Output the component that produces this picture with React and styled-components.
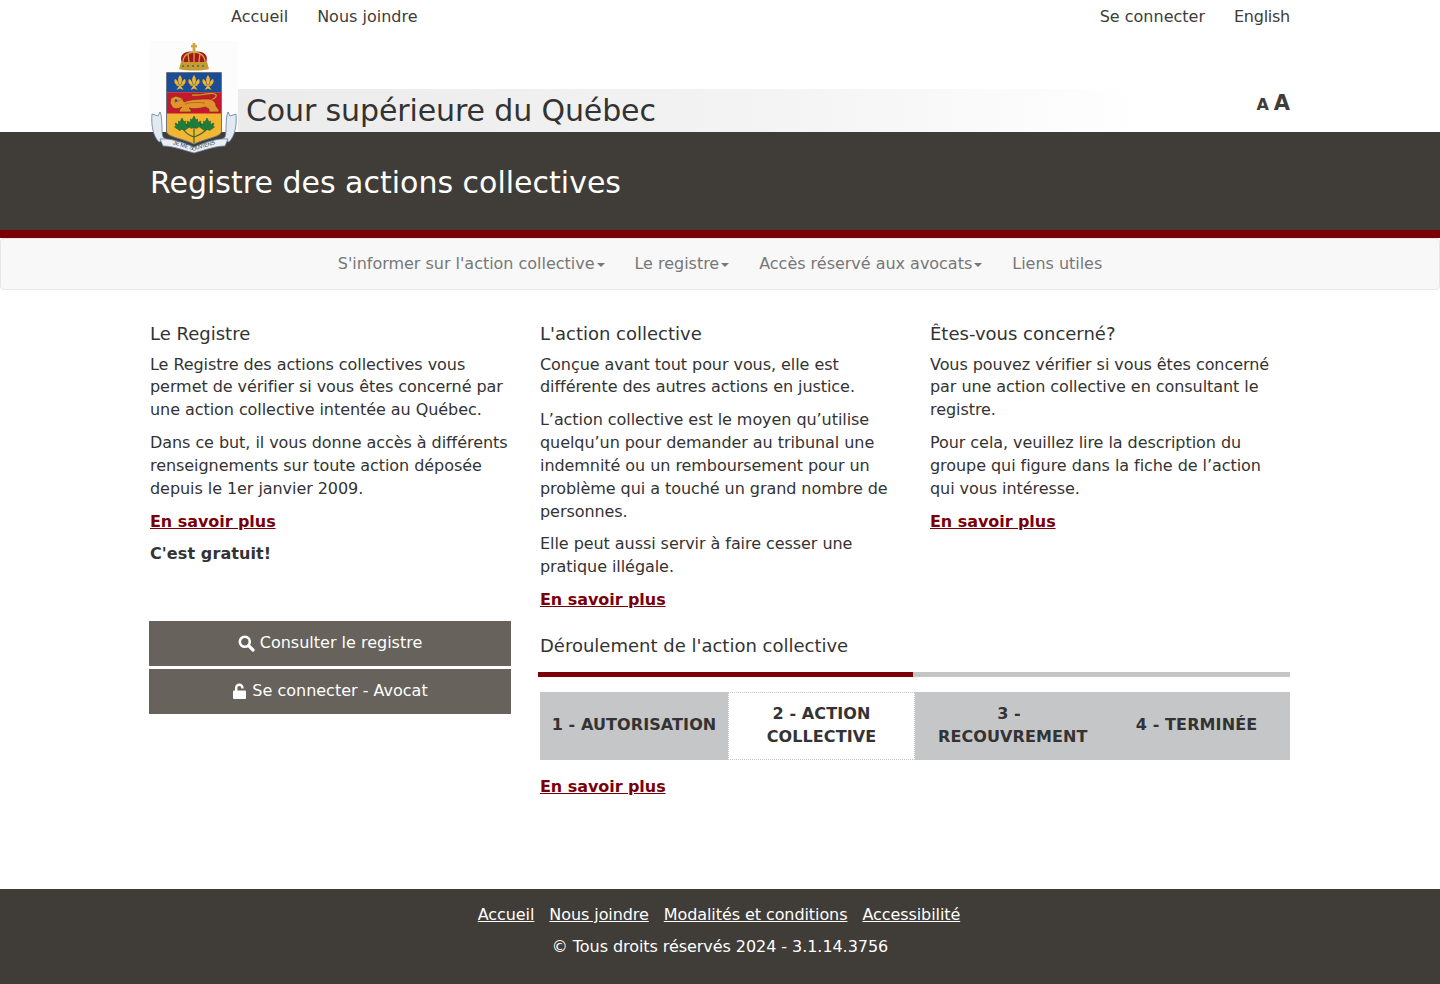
import React from 'react'
import styled, { createGlobalStyle } from 'styled-components'

const GlobalStyle = createGlobalStyle`
  * { box-sizing: border-box; }
  body {
    margin: 0;
    background: #fff;
    color: #333;
    font-family: "DejaVu Sans", sans-serif;
    font-size: 16px;
    line-height: 22.857px;
    letter-spacing: -0.06px;
  }
`

const leaf = (x, y) =>
  `M${x} ${y - 8} L${x + 2} ${y - 4} L${x + 3.5} ${y - 5} L${x + 3.5} ${y - 1.5} L${x + 7} ${y - 3} L${x + 6} ${y} L${x + 7.5} ${y + 1} L${x + 2.5} ${y + 4.5} L${x + 0.6} ${y + 3.5} L${x - 0.6} ${y + 3.5} L${x - 2.5} ${y + 4.5} L${x - 7.5} ${y + 1} L${x - 6} ${y} L${x - 7} ${y - 3} L${x - 3.5} ${y - 1.5} L${x - 3.5} ${y - 5} L${x - 2} ${y - 4} Z`

const Crest = () => (
  <svg width="90" height="114" viewBox="0 0 90 114">
    <rect x="1" y="0" width="88" height="91" fill="#fcfcfc" />
    {/* couronne */}
    <path d="M33 22 C29 12 39 9 45 11 C51 9 61 12 57 22 Z" fill="#a4161c" />
    <path d="M34 21 C34 15 39 11 45 11 C51 11 56 15 56 21 M45 11 V21 M39 12 L40 21 M51 12 L50 21" fill="none" stroke="#d2a63e" strokeWidth="1.3" />
    <path d="M32 21 H58 L60 28 C52 30 38 30 30 28 Z" fill="#c79a34" />
    <path d="M33 25 H57" stroke="#2f7a46" strokeWidth="1.6" strokeDasharray="2 3" />
    <rect x="43.6" y="2" width="2.8" height="9" fill="#d2a63e" />
    <rect x="42" y="4" width="6" height="2.4" fill="#d2a63e" />
    {/* ecu */}
    <path d="M17.5 31.5 H72.5 V90 C72.5 96 58 97 45 103 C32 97 17.5 96 17.5 90 Z" fill="#f2b632" stroke="#6a7686" strokeWidth="1" />
    <rect x="18" y="32" width="54" height="19.5" fill="#1b4c96" />
    <rect x="18" y="51.5" width="54" height="21" fill="#c8162e" />
    {/* fleurs de lys */}
    {[31, 45, 59].map((x) => (
      <g key={x} fill="#efb52e">
        <path d={`M${x} 34 C${x + 2.4} 37 ${x + 2.4} 40 ${x + 0.8} 43 H${x - 0.8} C${x - 2.4} 40 ${x - 2.4} 37 ${x} 34 Z`} />
        <path d={`M${x - 1.4} 44 C${x - 5} 44 ${x - 6.5} 41 ${x - 5} 38 C${x - 3.5} 38.5 ${x - 2.5} 40 ${x - 1.6} 42 Z`} />
        <path d={`M${x + 1.4} 44 C${x + 5} 44 ${x + 6.5} 41 ${x + 5} 38 C${x + 3.5} 38.5 ${x + 2.5} 40 ${x + 1.6} 42 Z`} />
        <rect x={x - 3.5} y="43.4" width="7" height="1.4" />
        <path d={`M${x - 1} 45 L${x - 3.5} 49 L${x} 47.6 L${x + 3.5} 49 L${x + 1} 45 Z`} />
      </g>
    ))}
    {/* leopard */}
    <path d="M62 59 C68 57 69 53 64 52.5 C58 52 52 55 43 54" fill="none" stroke="#8a4a14" strokeWidth="2.2" />
    <path d="M62 59 C68 57 69 53 64 52.5 C58 52 52 55 43 54" fill="none" stroke="#e3932e" strokeWidth="1.2" />
    <path d="M22 57 L27 55 L33 57 L35 61 C42 58 52 58 60 58 C65 59 67 62 67 65 L70 69 L70 71 L60 71 L60 68 L56 66 C50 68 44 68 40 67 L42 69 L42 71 L30 71 L31 68 L33 66 C30 68 26 68 24 67 L21 62 Z" fill="#e3932e" stroke="#74320f" strokeWidth="0.7" />
    <path d="M36 63 C42 61 50 61 56 62 M33 58 C30 60 27 61 25 61" fill="none" stroke="#a85d1a" strokeWidth="0.7" />
    <circle cx="27" cy="59.5" r="1.2" fill="#234a9c" />
    {/* feuilles d'erable */}
    <path d="M45 84 V102 M34 88 C38 94 42 95 45 96 M58 88 C52 94 48 95 45 96" fill="none" stroke="#3f6a30" strokeWidth="1.2" />
    <path d={leaf(33, 85)} fill="#1f7d3b" stroke="#14532a" strokeWidth="0.5" />
    <path d={leaf(45, 83)} fill="#1f7d3b" stroke="#14532a" strokeWidth="0.5" />
    <path d={leaf(58, 85)} fill="#1f7d3b" stroke="#14532a" strokeWidth="0.5" />
    {/* ruban */}
    <path d="M3 73 L9 75 L11 71 C14 78 12 90 14 96 L18 99 L10 101 C4 95 2 84 3 73 Z" fill="#e2e9f1" stroke="#5f7f9f" strokeWidth="0.8" />
    <path d="M87 73 L81 75 L79 71 C76 78 78 90 76 96 L72 99 L80 101 C86 95 88 84 87 73 Z" fill="#e2e9f1" stroke="#5f7f9f" strokeWidth="0.8" />
    <path d="M11 98 C22 97 32 101 45 106 C58 101 68 97 79 98 L76 105 C66 105 56 109 45 112 C34 109 24 105 14 105 Z" fill="#e8eef4" stroke="#5f7f9f" strokeWidth="0.8" />
    <path id="devise" d="M15 101.5 C26 103 36 107 45 109.5 C54 107 64 103 75 101.5" fill="none" />
    <text fontSize="5.4" fontFamily="Liberation Sans, sans-serif" fill="#2e3a48" textAnchor="middle">
      <textPath href="#devise" startOffset="50%">JE ME SOUVIENS</textPath>
    </text>
  </svg>
)

const SearchIcon = () => (
  <svg width="17" height="17" viewBox="0 0 17 17">
    <circle cx="6.8" cy="6.8" r="5" fill="none" stroke="#fff" strokeWidth="2.6" />
    <path d="M10.6 10.6 L15 15" stroke="#fff" strokeWidth="3.2" strokeLinecap="round" />
  </svg>
)

const UnlockIcon = () => (
  <svg width="15" height="16" viewBox="0 0 15 16">
    <path d="M3 8 V4.8 C3 2.2 5 .6 7.3 .6 C9.6 .6 11.6 2.2 11.6 4.8 V5.6 H9.2 V4.8 C9.2 3.6 8.4 2.9 7.3 2.9 C6.2 2.9 5.4 3.6 5.4 4.8 V8 Z" fill="#fff" />
    <rect x="1" y="7.4" width="13" height="8.6" rx="1" fill="#fff" />
  </svg>
)

const TopBar = styled.div`
  width: 1140px;
  margin: 0 auto;
  height: 41px;
  padding: 6px 0 0 81px;
  display: flex;
  justify-content: space-between;
`

const TopLinks = styled.div`
  display: flex;
  gap: 29px;
`

const TopLink = styled.a`
  color: #403c37;
  height: 23px;
  letter-spacing: ${(p) => (p.$tight ? '-0.25px' : '0')};
`

const BrandRow = styled.div`
  width: 1140px;
  height: 91px;
  margin: 0 auto;
  position: relative;
  display: flex;
  align-items: flex-end;
  justify-content: space-between;
`

const BrandBand = styled.div`
  width: 1000px;
  height: 43px;
  padding-left: 96px;
  background: linear-gradient(to right, #eaeaea, #f3f3f3 60%, #fff);
  display: flex;
  align-items: center;
`

const BrandTitle = styled.div`
  font-size: 30px;
  line-height: 43px;
  letter-spacing: -0.12px;
  color: #333;
`

const CrestBox = styled.div`
  position: absolute;
  left: -1px;
  top: 0;
  z-index: 2;
  line-height: 0;
`

const FontSizer = styled.div`
  display: flex;
  align-items: baseline;
  gap: 5px;
  height: 44px;
  color: #403c37;
  font-weight: bold;
`

const FontA = styled.span`
  font-size: ${(p) => p.$size}px;
  line-height: 30px;
`

const DarkBand = styled.div`
  background: #403c37;
  height: 98px;
`

const DarkInner = styled.div`
  width: 1140px;
  margin: 0 auto;
  padding-top: 29px;
  font-size: 30px;
  line-height: 43px;
  letter-spacing: 0;
  color: #fff;
`

const RedBar = styled.div`
  height: 8px;
  background: #7a0008;
`

const NavBar = styled.nav`
  height: 52px;
  background: #f8f8f8;
  border: 1px solid #e7e7e7;
  border-radius: 4px;
  display: flex;
  justify-content: center;
  gap: 30px;
  color: #777;
  letter-spacing: -0.02px;
  align-items: center;
`

const NavItem = styled.a`
  display: flex;
  align-items: center;
`

const Caret = styled.span`
  width: 0;
  height: 0;
  margin-left: 2px;
  margin-top: 2px;
  border-top: 4px solid #777;
  border-left: 4px solid transparent;
  border-right: 4px solid transparent;
`

const Main = styled.main`
  width: 1140px;
  height: 599px;
  margin: 0 auto;
  padding-top: 32px;
  display: grid;
  grid-template-columns: 360px 750px;
  column-gap: 30px;
  align-items: start;
`

const Heading = styled.h4`
  margin: 0 0 7.6px;
  font-size: 18px;
  font-weight: 500;
  line-height: 24px;
  letter-spacing: 0;
  color: #333;
`

const Para = styled.p`
  margin: 0 0 9.9px;
`

const Strong = styled.strong`
  letter-spacing: 0.1px;
`

const MoreLink = styled.a`
  color: #7a0008;
  font-weight: bold;
  text-decoration: underline;
`

const Buttons = styled.div`
  margin: 55px -1px 0;
  display: flex;
  flex-direction: column;
  gap: 3px;
`

const ActionButton = styled.a`
  height: 45px;
  padding-bottom: 1px;
  background: #67625c;
  color: #fff;
  letter-spacing: 0;
  display: flex;
  align-items: center;
  justify-content: center;
  gap: 5px;
`

const RightCols = styled.div`
  display: grid;
  grid-template-columns: 360px 360px;
  column-gap: 30px;
`

const StepsHeading = styled(Heading)`
  margin: 12.4px 0 14px;
`

const Progress = styled.div`
  height: 5px;
  margin-left: -2px;
  background: #c5c5c5;
`

const ProgressFill = styled.div`
  height: 100%;
  background: #7a0008;
`

const Steps = styled.div`
  margin-top: 15px;
  height: 68px;
  background: #c5c6c8;
  display: grid;
  grid-template-columns: 188px 187px 188px 187px;
`

const Step = styled.div`
  display: flex;
  align-items: center;
  padding: 0 ${(p) => p.$pad}px 1px;
  text-align: center;
  font-weight: bold;
  text-transform: uppercase;
  letter-spacing: 0.1px;
  color: #333;
  background: ${(p) => (p.$active ? '#fff' : 'transparent')};
  border: ${(p) => (p.$active ? '1px dotted #c5c6c8' : 'none')};
`

const StepLabel = styled.span`
  flex: 1 1 0;
  min-width: 0;
`

const StepsLink = styled.div`
  margin-top: 16px;
`

const Footer = styled.footer`
  height: 95px;
  background: #403c37;
  color: #fff;
  padding-top: 15px;
  text-align: center;
`

const FooterLinks = styled.div`
  display: flex;
  justify-content: center;
  gap: 15px;
  margin-bottom: 9px;
  padding-right: 2px;
`

const FooterLink = styled.a`
  color: #fff;
  letter-spacing: -0.08px;
  text-decoration: underline;
`

const steps = [
  { label: '1 - Autorisation', pad: 10 },
  { label: '2 - Action collective', pad: 10, active: true },
  { label: '3 - Recouvrement', pad: 23 },
  { label: '4 - Terminée', pad: 10 },
]

export default function App() {
  return (
    <>
      <GlobalStyle />
      <TopBar>
        <TopLinks>
          <TopLink>Accueil</TopLink>
          <TopLink>Nous joindre</TopLink>
        </TopLinks>
        <TopLinks>
          <TopLink>Se connecter</TopLink>
          <TopLink $tight>English</TopLink>
        </TopLinks>
      </TopBar>
      <BrandRow>
        <CrestBox>
          <Crest />
        </CrestBox>
        <BrandBand>
          <BrandTitle>Cour supérieure du Québec</BrandTitle>
        </BrandBand>
        <FontSizer>
          <FontA $size={16}>A</FontA>
          <FontA $size={21}>A</FontA>
        </FontSizer>
      </BrandRow>
      <DarkBand>
        <DarkInner>Registre des actions collectives</DarkInner>
      </DarkBand>
      <RedBar />
      <NavBar>
        <NavItem>S'informer sur l'action collective<Caret /></NavItem>
        <NavItem>Le registre<Caret /></NavItem>
        <NavItem>Accès réservé aux avocats<Caret /></NavItem>
        <NavItem>Liens utiles</NavItem>
      </NavBar>
      <Main>
        <section>
          <Heading>Le Registre</Heading>
          <Para>Le Registre des actions collectives vous permet de vérifier si vous êtes concerné par une action collective intentée au Québec.</Para>
          <Para>Dans ce but, il vous donne accès à différents renseignements sur toute action déposée depuis le 1er janvier 2009.</Para>
          <Para><MoreLink>En savoir plus</MoreLink></Para>
          <Para><Strong>C'est gratuit!</Strong></Para>
          <Buttons>
            <ActionButton><SearchIcon />Consulter le registre</ActionButton>
            <ActionButton><UnlockIcon />Se connecter - Avocat</ActionButton>
          </Buttons>
        </section>
        <section>
          <RightCols>
            <div>
              <Heading>L'action collective</Heading>
              <Para>Conçue avant tout pour vous, elle est différente des autres actions en justice.</Para>
              <Para>L’action collective est le moyen qu’utilise quelqu’un pour demander au tribunal une indemnité ou un remboursement pour un problème qui a touché un grand nombre de personnes.</Para>
              <Para>Elle peut aussi servir à faire cesser une pratique illégale.</Para>
              <Para><MoreLink>En savoir plus</MoreLink></Para>
            </div>
            <div>
              <Heading>Êtes-vous concerné?</Heading>
              <Para>Vous pouvez vérifier si vous êtes concerné par une action collective en consultant le registre.</Para>
              <Para>Pour cela, veuillez lire la description du groupe qui figure dans la fiche de l’action qui vous intéresse.</Para>
              <Para><MoreLink>En savoir plus</MoreLink></Para>
            </div>
          </RightCols>
          <StepsHeading>Déroulement de l'action collective</StepsHeading>
          <Progress>
            <ProgressFill style={{ width: '49.87%' }} />
          </Progress>
          <Steps>
            {steps.map((s) => (
              <Step key={s.label} $active={s.active} $pad={s.pad}>
                <StepLabel>{s.label}</StepLabel>
              </Step>
            ))}
          </Steps>
          <StepsLink><MoreLink>En savoir plus</MoreLink></StepsLink>
        </section>
      </Main>
      <Footer>
        <FooterLinks>
          <FooterLink>Accueil</FooterLink>
          <FooterLink>Nous joindre</FooterLink>
          <FooterLink>Modalités et conditions</FooterLink>
          <FooterLink>Accessibilité</FooterLink>
        </FooterLinks>
        <div>© Tous droits réservés 2024 - 3.1.14.3756</div>
      </Footer>
    </>
  )
}
